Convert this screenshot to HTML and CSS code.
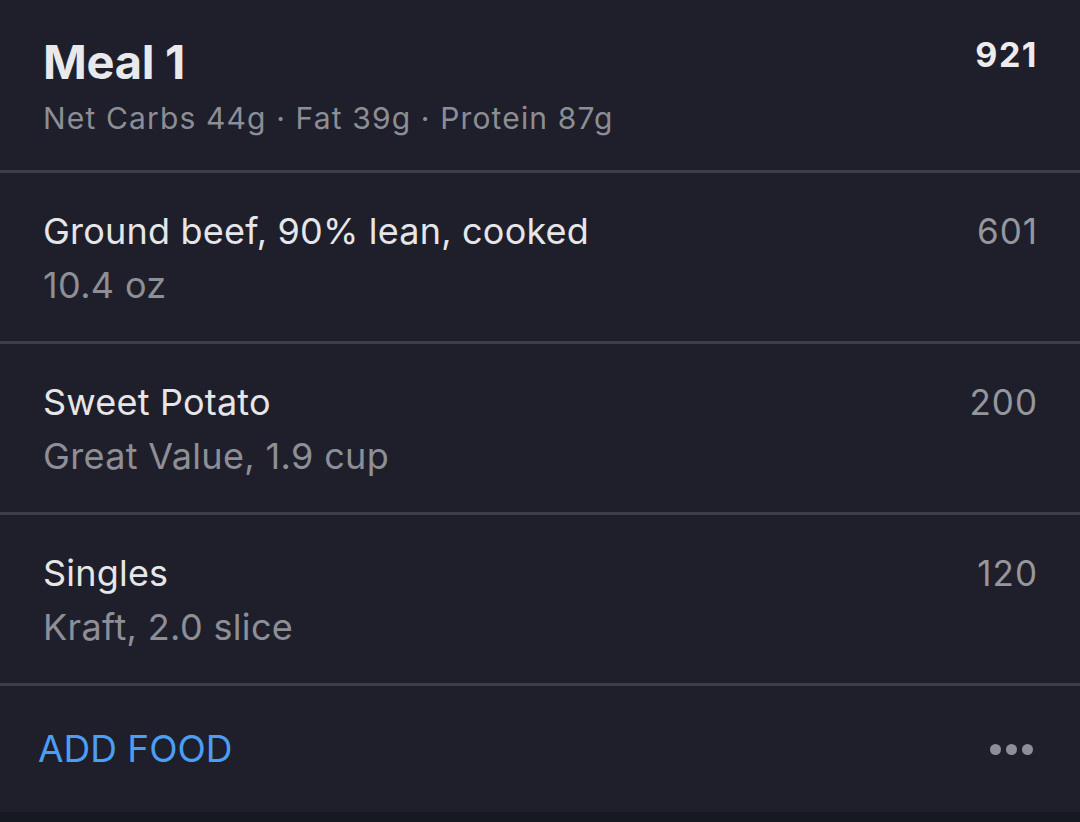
FILE: index.html
```html
<!DOCTYPE html>
<html>
<head>
<meta charset="utf-8">
<link rel="stylesheet" href="styles.css">
</head>
<body>
<div class="card">
  <div class="header">
    <div class="header-text">
      <div class="title">Meal 1</div>
      <div class="macros">Net Carbs 44g · Fat 39g · Protein 87g</div>
    </div>
    <div class="total">921</div>
  </div>
  <div class="row">
    <div class="row-text">
      <div class="name">Ground beef, 90% lean, cooked</div>
      <div class="qty">10.4 oz</div>
    </div>
    <div class="cal">601</div>
  </div>
  <div class="row">
    <div class="row-text">
      <div class="name">Sweet Potato</div>
      <div class="qty">Great Value, 1.9 cup</div>
    </div>
    <div class="cal">200</div>
  </div>
  <div class="row">
    <div class="row-text">
      <div class="name">Singles</div>
      <div class="qty">Kraft, 2.0 slice</div>
    </div>
    <div class="cal">120</div>
  </div>
  <div class="footer">
    <div class="add">ADD FOOD</div>
    <div class="more"><span class="dot"></span><span class="dot"></span><span class="dot"></span></div>
  </div>
</div>
</body>
</html>
```
FILE: styles.css
```css
html, body {
  margin: 0;
  padding: 0;
  background: #161822;
  font-family: Inter, "Noto Sans", sans-serif;
}
.card {
  width: 1080px;
  height: 812px;
  background: #1e1f2b;
  display: flex;
  flex-direction: column;
}
.header {
  height: 173px;
  box-sizing: border-box;
  padding: 0 43px;
  display: flex;
  justify-content: space-between;
  align-items: flex-start;
  border-bottom: 3px solid #3b3d49;
}
.title {
  margin-top: 33px;
  font-size: 47px;
  font-weight: 700;
  color: #e9e9eb;
  line-height: 58px;
  letter-spacing: -0.3px;
}
.macros {
  margin-top: 9px;
  font-size: 30px;
  color: #8d8e95;
  line-height: 36px;
  letter-spacing: 1.15px;
}
.total {
  margin-top: 33px;
  font-size: 34px;
  font-weight: 700;
  color: #ececee;
  line-height: 44px;
  letter-spacing: 1.5px;
  margin-right: -1px;
}
.row {
  height: 171px;
  box-sizing: border-box;
  padding: 0 43px;
  display: flex;
  justify-content: space-between;
  align-items: flex-start;
  border-bottom: 3px solid #3b3d49;
}
.name {
  margin-top: 35px;
  font-size: 36px;
  color: #e6e6e8;
  line-height: 46px;
  letter-spacing: 0.2px;
}
.qty {
  margin-top: 8px;
  font-size: 36px;
  color: #8e8f96;
  line-height: 46px;
  letter-spacing: 0.35px;
}
.cal {
  margin-top: 35px;
  font-size: 35px;
  color: #96979d;
  line-height: 46px;
  letter-spacing: 1px;
  margin-right: -1px;
}
.footer {
  flex: 1;
  display: flex;
  justify-content: space-between;
  align-items: center;
  padding: 0 47px 0 38px;
}
.add {
  font-size: 37px;
  color: #4a9ff5;
  line-height: 44px;
}
.more {
  display: flex;
  gap: 5px;
}
.dot {
  width: 11px;
  height: 11px;
  border-radius: 50%;
  background: #8e8f96;
}
```
